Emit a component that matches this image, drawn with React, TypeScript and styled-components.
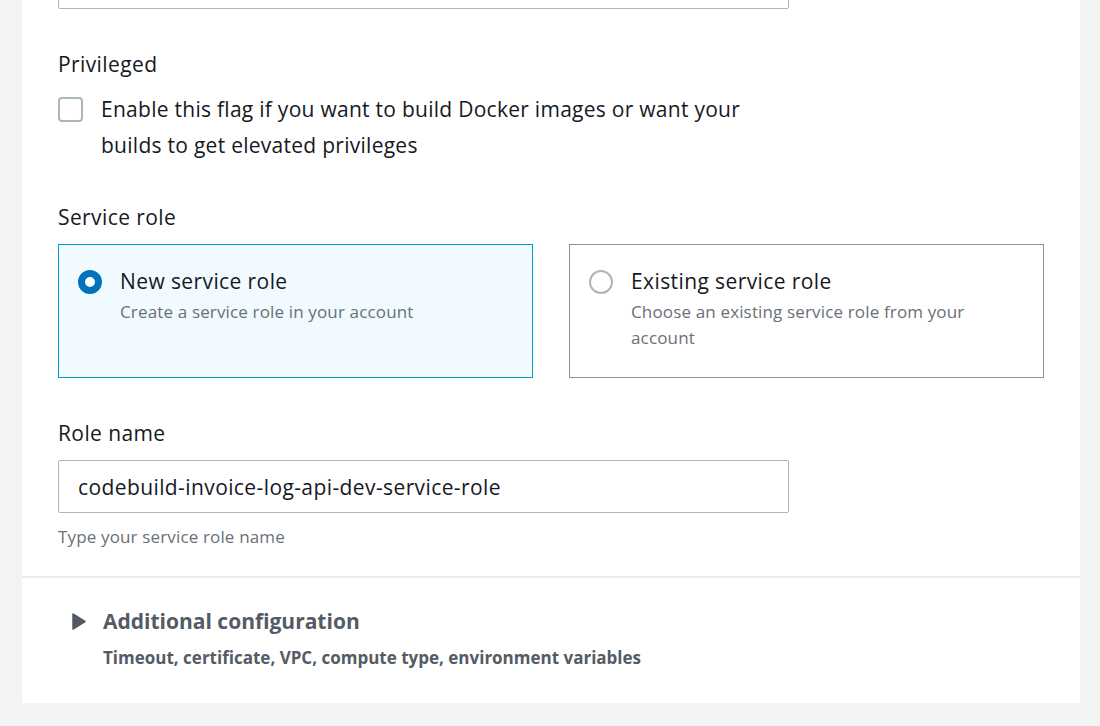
import React from "react";
import styled, { createGlobalStyle } from "styled-components";

const Global = createGlobalStyle`
  html, body { margin: 0; padding: 0; background: #f2f3f3; }
  body { font-family: "Open Sans", "Liberation Sans", sans-serif; color: #16191f; }
  * { box-sizing: border-box; }
`;

const Page = styled.div`
  width: 1100px;
  height: 726px;
  overflow: hidden;
  padding: 0 20px 0 22px;
  background: #f2f3f3;
`;

const Panel = styled.div`
  background: #ffffff;
  display: flex;
  flex-direction: column;
`;

const Section = styled.section`
  display: flex;
  flex-direction: column;
  padding: 0 35px 28px 36px;
`;

const Divider = styled.hr`
  margin: 0;
  border: none;
  height: 2px;
  background: #eaeded;
`;

const TextBox = styled.div<{ $cut?: boolean }>`
  width: 731px;
  height: 53px;
  border: 1px solid #aab7b8;
  border-radius: 2px;
  display: flex;
  align-items: center;
  padding: 0 19px;
  font-size: 21px;
  letter-spacing: 0.4px;
  color: #16191f;
  margin-top: ${(p) => (p.$cut ? "-44px" : "15px")};
`;

const Label = styled.div<{ $gap: number }>`
  font-size: 21px;
  letter-spacing: 0.4px;
  line-height: 24px;
  color: #16191f;
  margin-top: ${(p) => p.$gap}px;
`;

const CheckRow = styled.label`
  display: flex;
  align-items: flex-start;
  gap: 18px;
  width: 731px;
  margin-top: 15px;
`;

const CheckBox = styled.span`
  flex: none;
  width: 25px;
  height: 25px;
  margin-top: 6px;
  border: 2px solid #aab7b8;
  border-radius: 4px;
  background: #fff;
`;

const CheckText = styled.span`
  max-width: 660px;
  font-size: 21px;
  letter-spacing: 0.27px;
  line-height: 36px;
  color: #16191f;
`;

const Tiles = styled.div`
  display: grid;
  grid-template-columns: 475px 475px;
  gap: 36px;
  margin-top: 15px;
`;

const Tile = styled.div<{ $selected?: boolean }>`
  height: 134px;
  border: 1px solid ${(p) => (p.$selected ? "#00a1c9" : "#879596")};
  background: ${(p) => (p.$selected ? "#f1faff" : "#ffffff")};
  display: flex;
  align-items: flex-start;
  gap: 18px;
  padding: 23px 20px 0 19px;
`;

const Radio = styled.span<{ $checked?: boolean }>`
  flex: none;
  width: 24px;
  height: 24px;
  margin-top: 2px;
  border-radius: 50%;
  background: #fff;
  border: ${(p) => (p.$checked ? "7.5px solid #0073bb" : "2px solid #aab7b8")};
`;

const TileBody = styled.div`
  display: flex;
  flex-direction: column;
  gap: 5px;
`;

const TileTitle = styled.div`
  font-size: 21px;
  letter-spacing: 0.4px;
  line-height: 26px;
  color: #16191f;
`;

const TileDesc = styled.div`
  font-size: 17px;
  letter-spacing: 0.15px;
  line-height: 26px;
  color: #687078;
`;

const Hint = styled.div`
  font-size: 17px;
  letter-spacing: 0.15px;
  line-height: 22px;
  color: #687078;
  margin-top: 13px;
`;

const Expander = styled.section`
  display: flex;
  flex-direction: column;
  padding: 29px 35px 33px 50px;
`;

const ExpanderHead = styled.div`
  display: flex;
  align-items: center;
  gap: 17px;
  font-size: 21px;
  line-height: 28px;
  font-weight: 700;
  color: #545b64;
`;

const ExpanderDesc = styled.div`
  margin-top: 11px;
  margin-left: 31px;
  font-size: 17px;
  line-height: 24px;
  font-weight: 700;
  color: #545b64;
`;

const Caret = () => (
  <svg width="14" height="17" viewBox="0 0 14 17" aria-hidden="true">
    <path d="M1 1 L13 8.5 L1 16 Z" fill="#545b64" stroke="#545b64" strokeWidth="1.5" strokeLinejoin="round" />
  </svg>
);

export default function App() {
  return (
    <>
      <Global />
      <Page>
        <Panel>
          <Section>
            <TextBox $cut />
            <Label $gap={43}>Privileged</Label>
            <CheckRow>
              <CheckBox />
              <CheckText>
                Enable this flag if you want to build Docker images or want your builds to get elevated privileges
              </CheckText>
            </CheckRow>
            <Label $gap={42}>Service role</Label>
            <Tiles>
              <Tile $selected>
                <Radio $checked />
                <TileBody>
                  <TileTitle>New service role</TileTitle>
                  <TileDesc>Create a service role in your account</TileDesc>
                </TileBody>
              </Tile>
              <Tile>
                <Radio />
                <TileBody>
                  <TileTitle>Existing service role</TileTitle>
                  <TileDesc>Choose an existing service role from your account</TileDesc>
                </TileBody>
              </Tile>
            </Tiles>
            <Label $gap={43}>Role name</Label>
            <TextBox>codebuild-invoice-log-api-dev-service-role</TextBox>
            <Hint>Type your service role name</Hint>
          </Section>
          <Divider />
          <Expander>
            <ExpanderHead>
              <Caret />
              Additional configuration
            </ExpanderHead>
            <ExpanderDesc>Timeout, certificate, VPC, compute type, environment variables</ExpanderDesc>
          </Expander>
        </Panel>
      </Page>
    </>
  );
}
